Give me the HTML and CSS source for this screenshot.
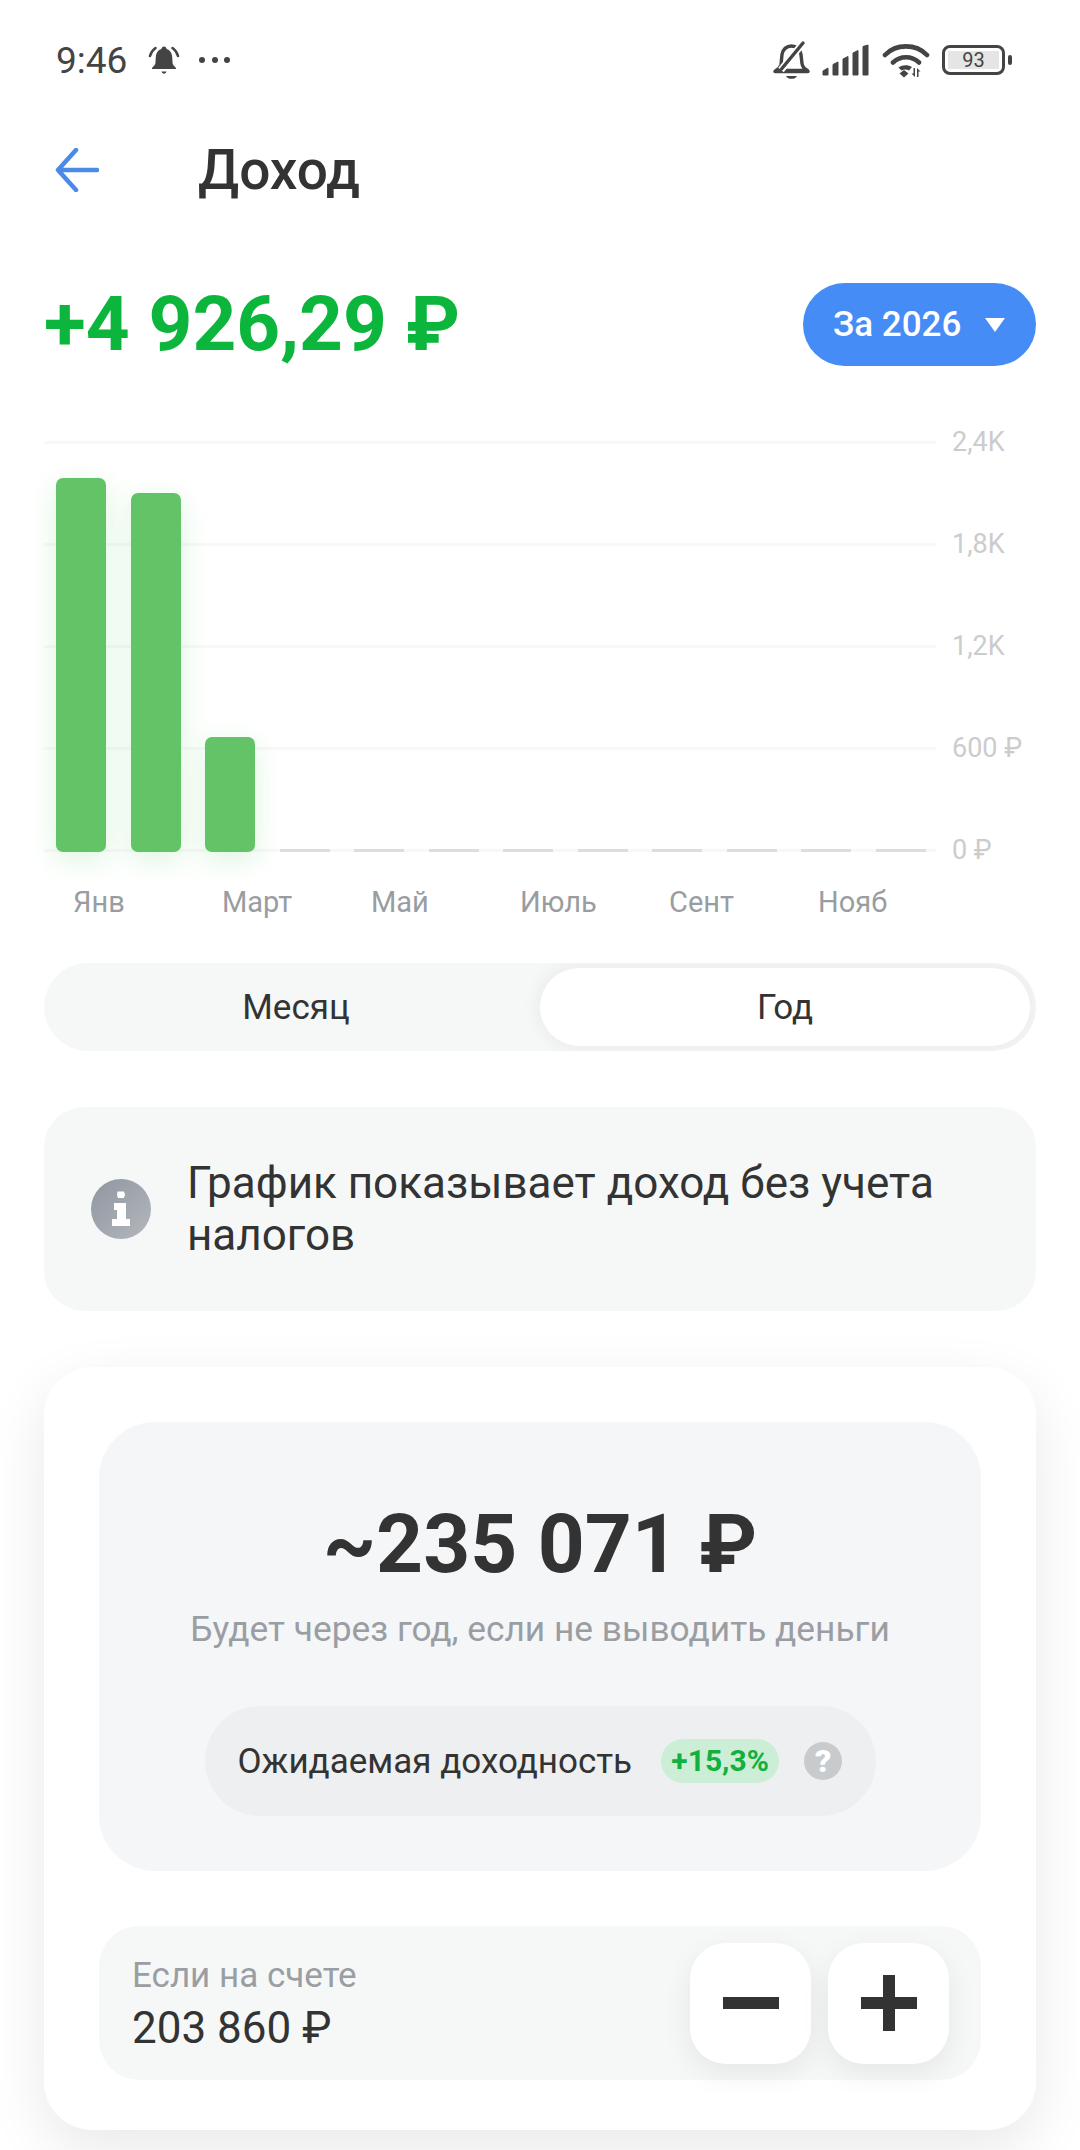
FILE: index.html
```html
<!DOCTYPE html>
<html lang="ru">
<head>
  <meta charset="UTF-8" />
  <title>Доход</title>
  <link rel="stylesheet" href="styles.css">
</head>
<body>
  <div class="status">
    <div class="status-left">
      <span class="time">9:46</span>
      <svg class="alarm" width="32" height="30" viewBox="0 0 32 30">
        <path d="M16 1.500c1.500 0 2.400 1 2.600 2.400 3.600 1 5.400 4 5.600 8l.4 6.400c.1 1.400 1.600 2.800 3.400 4.700v1H4v-1c1.800-1.900 3.300-3.300 3.400-4.700l.4-6.400c.2-4 2-7 5.600-8 .2-1.400 1.100-2.400 2.600-2.400zM13.500 26.500h5c-.4 1.400-1.300 2.200-2.500 2.200s-2.100-.8-2.500-2.200z" fill="#444"/>
        <path d="M7.500 3C4.500 5 3 7.500 2 11M24.500 3c3 2 4.500 4.500 5.500 8" fill="none" stroke="#444" stroke-width="2.600" stroke-linecap="round"/>
      </svg>
      <span class="dots"><i></i><i></i><i></i></span>
    </div>
    <div class="status-right">
      <svg width="37" height="40" viewBox="0 0 37 40">
        <path d="M3 30.500c2.500-1.500 4.500-3.500 5-6l1-10c.6-5 4.500-8.500 9.500-8.500s9 3.500 9.500 8.500l1 9c.4 3 2.500 5.500 5.500 7z" fill="none" stroke="#444" stroke-width="3.400" stroke-linejoin="round"/>
        <path d="M2 31.500h33" stroke="#444" stroke-width="3.400" stroke-linecap="round"/>
        <path d="M13 36h11c-1 2-3 2.800-5.500 2.800S14 38 13 36z" fill="#444"/>
        <path d="M8 30L30 3" stroke="#fff" stroke-width="7"/>
        <path d="M8.500 29L30 3" stroke="#444" stroke-width="3.400" stroke-linecap="round"/>
      </svg>
      <svg class="signal" width="48" height="32" viewBox="0 0 48 32">
        <path d="M1 31v-4l5-3v7zM11 31V20.500l5-2.500v13zM21 31V15l5-2.500V31zM31 31V9l5-2.500V31zM41 31V2.500L46 1v30z" fill="#444" stroke="#444" stroke-width="1" stroke-linejoin="round"/>
      </svg>
      <svg class="wifi" width="48" height="36" viewBox="0 0 48 36">
        <path d="M3 13C14 1.500 34 1.500 45 13M11 20.500c7.500-7 18.500-7 26 0" fill="none" stroke="#444" stroke-width="4.600" stroke-linecap="round"/>
        <path d="M16.500 25.500c4-3 9.500-3 13.500-.5l-3 3.500c-2.500-1.200-5-1.200-7.500 0z" fill="#444"/>
        <path d="M22 28l4.500 3.500-4.500 4-4.500-4zM33 26v9l-3.500-3.500h2v-5.500zM35 35v-9l3.500 3.500h-2V35z" fill="#444"/>
      </svg>
      <div class="battery">
        <div class="battery-body"><span class="battery-level">93</span></div>
        <div class="battery-nub"></div>
      </div>
    </div>
  </div>

  <div class="header">
    <svg class="back" width="44" height="44" viewBox="0 0 44 44">
      <path d="M42 22H3M21 2L3 22l18 20" fill="none" stroke="#4a8ae8" stroke-width="4.500" stroke-linecap="round" stroke-linejoin="round"/>
    </svg>
    <h1 class="title">Доход</h1>
  </div>

  <div class="summary">
    <div class="income">+4 926,29 ₽</div>
    <div class="period">За 2026 <span class="caret"></span></div>
  </div>

  <div class="chart">
    <div class="grid">
      <div class="grid-row"><div class="grid-line"></div><span class="grid-label">2,4K</span></div>
      <div class="grid-row"><div class="grid-line"></div><span class="grid-label">1,8K</span></div>
      <div class="grid-row"><div class="grid-line"></div><span class="grid-label">1,2K</span></div>
      <div class="grid-row"><div class="grid-line"></div><span class="grid-label">600 ₽</span></div>
      <div class="grid-row"><div class="grid-line"></div><span class="grid-label">0 ₽</span></div>
    </div>
    <div class="bars">
      <div class="bar" style="height: 374px"></div>
      <div class="bar" style="height: 359px"></div>
      <div class="bar" style="height: 115px"></div>
      <div class="bar empty"></div>
      <div class="bar empty"></div>
      <div class="bar empty"></div>
      <div class="bar empty"></div>
      <div class="bar empty"></div>
      <div class="bar empty"></div>
      <div class="bar empty"></div>
      <div class="bar empty"></div>
      <div class="bar empty"></div>
    </div>
    <div class="months">
      <span>Янв</span><span>Март</span><span>Май</span><span>Июль</span><span>Сент</span><span>Нояб</span>
    </div>
  </div>

  <div class="toggle">
    <div class="toggle-item first">Месяц</div>
    <div class="toggle-item active">Год</div>
  </div>

  <div class="info">
    <div class="info-icon">
      <svg width="24" height="38" viewBox="0 0 24 38">
        <path d="M8.500 1.500h6.500l1 3-1 3.500H9l-1-3zM5 13h12v16h4v7H3v-7h5v-9H5z" fill="#fff"/>
      </svg>
    </div>
    <p class="info-text">График показывает доход без учета налогов</p>
  </div>

  <div class="card">
    <div class="forecast">
      <div class="forecast-value">~235 071 ₽</div>
      <div class="forecast-note">Будет через год, если не выводить деньги</div>
      <div class="yield">
        <span class="yield-label">Ожидаемая доходность</span>
        <span class="yield-badge">+15,3%</span>
        <span class="yield-help">?</span>
      </div>
    </div>
    <div class="balance">
      <div class="balance-text">
        <div class="balance-label">Если на счете</div>
        <div class="balance-value">203 860 ₽</div>
      </div>
      <div class="stepper">
        <div class="step"><span class="minus"></span></div>
        <div class="step"><span class="plus"></span></div>
      </div>
    </div>
  </div>
</body>
</html>
```

FILE: styles.css
```css
* {
  box-sizing: border-box;
}
html, body {
  margin: 0;
  height: 2150px;
  overflow: hidden;
}
body {
  width: 1080px;
  background: #fff;
  color: #333;
  font-family: Roboto, "Liberation Sans", sans-serif;
}

/* status bar */
.status {
  height: 120px;
  padding: 0 68px 0 56px;
  display: flex;
  justify-content: space-between;
  align-items: center;
  color: #444;
}
.status-left, .status-right {
  display: flex;
  align-items: center;
}
.time {
  font-size: 37px;
  width: 92px;
}
.dots {
  margin-left: 19px;
  display: flex;
  gap: 6.500px;
}
.dots i {
  width: 6px;
  height: 6px;
  border-radius: 50%;
  background: #444;
}
.signal {
  margin-left: 12px;
}
.wifi {
  margin-left: 12px;
}
.battery {
  margin-left: 12px;
  display: flex;
  align-items: center;
  gap: 3px;
}
.battery-body {
  width: 63px;
  height: 30px;
  border: 3.500px solid #444;
  border-radius: 8px;
  padding: 3px;
  display: flex;
}
.battery-level {
  flex: 1;
  background: #e5e5e5;
  font-size: 20px;
  line-height: 18px;
  text-align: center;
}
.battery-nub {
  width: 4px;
  height: 10px;
  background: #444;
  border-radius: 2px;
}

/* header */
.header {
  height: 100px;
  padding-left: 55px;
  display: flex;
  align-items: center;
}
.title {
  margin: 0 0 0 99px;
  font-size: 55px;
  font-weight: 500;
}

/* total */
.summary {
  margin-top: 63px;
  padding: 0 44px;
  display: flex;
  justify-content: space-between;
  align-items: center;
}
.income {
  font-size: 76.500px;
  line-height: 83px;
  font-weight: 700;
  color: #0cb53c;
}
.period {
  width: 233px;
  height: 83px;
  border-radius: 42px;
  background: #468cf7;
  color: #fff;
  font-size: 35px;
  font-weight: 500;
  display: flex;
  align-items: center;
  padding-left: 30px;
  gap: 24px;
}
.caret {
  border-left: 10px solid transparent;
  border-right: 10px solid transparent;
  border-top: 14px solid #fff;
}

/* chart */
.chart {
  position: relative;
  margin-top: 25px;
  padding-left: 44px;
}
.grid-row {
  height: 102px;
  display: flex;
  align-items: center;
}
.grid-line {
  width: 892px;
  height: 3px;
  background: #f8f8f8;
}
.grid-label {
  margin-left: 16px;
  font-size: 27px;
  color: #ccc;
}
.bars {
  position: absolute;
  left: 56px;
  top: 52px;
  height: 409px;
  display: flex;
  align-items: flex-end;
  gap: 24.500px;
}
.bar {
  width: 50px;
  background: #62c466;
  border-radius: 7px;
  box-shadow: 0 8px 28px rgba(98, 210, 110, .22);
}
.bar.empty {
  height: 3px;
  background: #ddd;
  border-radius: 0;
  box-shadow: none;
}
.months {
  margin-top: -16px;
  padding-left: 29px;
  display: grid;
  grid-template-columns: repeat(6, 149px);
  font-size: 29px;
  line-height: 34px;
  color: #999da1;
}

/* month / year switch */
.toggle {
  margin: 44px 44px 0;
  height: 88px;
  border-radius: 44px;
  background: #f6f7f7;
  padding: 5px 6px 5px 0;
  display: flex;
  overflow: hidden;
}
.toggle-item {
  flex: 1;
  display: flex;
  align-items: center;
  justify-content: center;
  font-size: 35px;
  border-radius: 39px;
}
.toggle-item.first {
  flex: none;
  width: 496px;
  padding-left: 8px;
}
.toggle-item.active {
  background: #fff;
  box-shadow: 0 0 12px 6px #eeefef;
}

/* info note */
.info {
  margin: 56px 44px 0;
  height: 204px;
  border-radius: 40px;
  background: #f6f8f8;
  padding-left: 47px;
  display: flex;
  align-items: center;
  gap: 36px;
}
.info-icon {
  width: 60px;
  height: 60px;
  flex: none;
  border-radius: 50%;
  background: linear-gradient(135deg, #8f96a0, #b4b8bd);
  display: flex;
  align-items: center;
  justify-content: center;
}
.info-text {
  margin: 0;
  width: 790px;
  font-size: 44px;
  line-height: 52px;
  color: #333;
}

/* forecast card */
.card {
  margin: 56px 44px 0;
  height: 763px;
  border-radius: 48px;
  background: #fff;
  padding: 55px 55px 0;
  box-shadow: 0 20px 60px rgba(0, 0, 0, .09);
}
.forecast {
  height: 449px;
  border-radius: 56px;
  background: #f5f6f8;
  padding-top: 74px;
  display: flex;
  flex-direction: column;
  align-items: center;
}
.forecast-value {
  font-size: 82px;
  line-height: 96px;
  font-weight: 700;
}
.forecast-note {
  margin-top: 16px;
  font-size: 35.300px;
  line-height: 42px;
  color: #9a9ea3;
}
.yield {
  margin-top: 56px;
  width: 671px;
  height: 110px;
  border-radius: 55px;
  background: #eeeff1;
  padding-left: 33px;
  display: flex;
  align-items: center;
}
.yield-label {
  font-size: 35px;
}
.yield-badge {
  margin-left: 29px;
  width: 118px;
  height: 44px;
  border-radius: 22px;
  background: #cdeed6;
  color: #12b03f;
  font-size: 30px;
  font-weight: 700;
  line-height: 44px;
  text-align: center;
}
.yield-help {
  margin-left: 25px;
  width: 38px;
  height: 38px;
  border-radius: 50%;
  background: #c8cbce;
  color: #fff;
  font-size: 32px;
  font-weight: 900;
  line-height: 38px;
  text-align: center;
}

.balance {
  margin-top: 55px;
  height: 154px;
  border-radius: 40px;
  background: #f6f8f8;
  padding: 0 32px 0 33px;
  display: flex;
  justify-content: space-between;
  align-items: center;
}
.balance-label {
  font-size: 35px;
  line-height: 42px;
  color: #9a9ea3;
}
.balance-value {
  margin-top: 8px;
  font-size: 44px;
  line-height: 46px;
}
.stepper {
  display: flex;
  gap: 17px;
}
.step {
  width: 121px;
  height: 121px;
  border-radius: 36px;
  background: #fff;
  box-shadow: 0 10px 30px rgba(0, 0, 0, .07);
  display: flex;
  align-items: center;
  justify-content: center;
}
.minus {
  width: 56px;
  height: 12px;
  background: #333;
}
.plus {
  width: 56px;
  height: 56px;
  background:
    linear-gradient(#333, #333) center / 56px 12px no-repeat,
    linear-gradient(#333, #333) center / 12px 56px no-repeat;
}
```
